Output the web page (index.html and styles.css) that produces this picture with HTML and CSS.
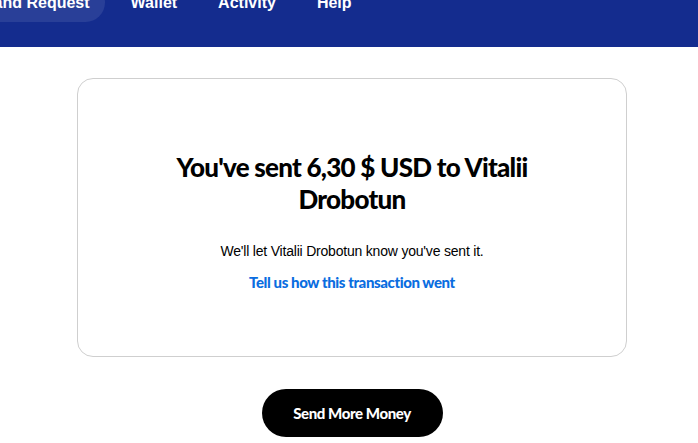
FILE: index.html
```html
<!DOCTYPE html>
<html lang="en">
<head>
    <meta charset="UTF-8">
    <meta name="viewport" content="width=device-width, initial-scale=1.0">
    <title>Payment sent</title>
    <link rel="stylesheet" href="styles.css">
</head>
<body>
    <!-- Top navigation -->
    <header class="top-bar">
        <nav class="nav">
            <a class="nav-item active" href="#">Send and Request</a>
            <a class="nav-item" href="#">Wallet</a>
            <a class="nav-item" href="#">Activity</a>
            <a class="nav-item" href="#">Help</a>
        </nav>
    </header>

    <main class="content">
        <div class="card">
            <h1 class="title">You've sent 6,30 $ USD to Vitalii Drobotun</h1>
            <p class="note">We'll let Vitalii Drobotun know you've sent it.</p>
            <a class="feedback" href="#">Tell us how this transaction went</a>
        </div>

        <button class="send-more">Send More Money</button>
    </main>
</body>
</html>
```

FILE: styles.css
```css
/* General Styles */
body {
    margin: 0;
    font-family: "Liberation Sans", Arial, sans-serif;
    background-color: #ffffff;
    color: #000;
}

.top-bar {
    background-color: #142c8e;
    height: 47px;
    overflow: hidden;
}

.nav {
    display: flex;
    align-items: center;
    margin-top: -17px;
    margin-left: -70px;
}

.nav-item {
    color: #ffffff;
    text-decoration: none;
    font-family: "Liberation Sans", Arial, sans-serif;
    font-weight: 700;
    font-size: 16px;
    line-height: 23px;
    padding: 8px 15px;
    margin-right: 11px;
    border-radius: 20px;
}

.nav-item.active {
    background-color: rgba(255, 255, 255, 0.09);
    padding-left: 20px;
}

.content {
    display: flex;
    flex-direction: column;
    align-items: center;
    padding-top: 31px;
    padding-left: 6px;
}

.card {
    width: 548px;
    height: 277px;
    border: 1px solid #cfcfcf;
    border-radius: 16px;
    display: flex;
    flex-direction: column;
    align-items: center;
}

.title {
    font-family: Lato, sans-serif;
    font-weight: 900;
    font-size: 26px;
    line-height: 32px;
    text-align: center;
    width: 380px;
    margin: 72px 0 0;
    letter-spacing: -0.75px;
}

.note {
    font-size: 14px;
    letter-spacing: -0.2px;
    margin: 28px 0 0;
}

.feedback {
    font-family: Lato, sans-serif;
    font-weight: 900;
    font-size: 15px;
    letter-spacing: -0.4px;
    color: #0a6de0;
    text-decoration: none;
    margin-top: 14px;
}

.send-more {
    margin-top: 32px;
    width: 181px;
    height: 48px;
    border: none;
    border-radius: 24px;
    background-color: #000;
    color: #fff;
    font-family: Lato, sans-serif;
    font-weight: 900;
    font-size: 15px;
    letter-spacing: -0.4px;
    cursor: pointer;
}
```
